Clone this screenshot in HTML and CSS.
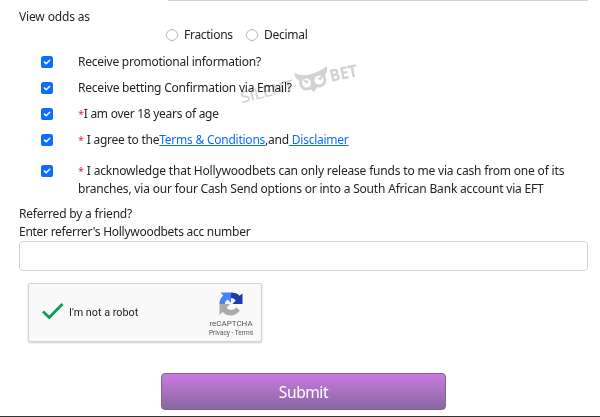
FILE: index.html
```
<!DOCTYPE html>
<html lang="en">
<head>
<meta charset="utf-8">
<title>Registration</title>
<link rel="stylesheet" href="styles.css">
</head>
<body>
<main class="page">
  <div class="previous-field"></div>
  <p class="label odds-label"><span>View odds as</span></p>
  <div class="odds">
    <label class="radio"><i class="circle"></i><span class="fractions">Fractions</span></label>
    <label class="radio"><i class="circle"></i><span class="decimal">Decimal</span></label>
  </div>
  <div class="checks">
    <div class="check"><svg class="box" viewBox="0 0 12 12"><rect width="12" height="12" rx="2.6"/><path d="M3.5 6.1 5.2 7.8 8.7 4.3"/></svg><p><span class="t-promo">Receive promotional information?</span></p></div>
    <div class="check"><svg class="box" viewBox="0 0 12 12"><rect width="12" height="12" rx="2.6"/><path d="M3.5 6.1 5.2 7.8 8.7 4.3"/></svg><p><span class="t-email">Receive betting Confirmation via Email?</span></p></div>
    <div class="check"><svg class="box" viewBox="0 0 12 12"><rect width="12" height="12" rx="2.6"/><path d="M3.5 6.1 5.2 7.8 8.7 4.3"/></svg><p><span class="t-age"><b>*</b>I am over 18 years of age</span></p></div>
    <div class="check"><svg class="box" viewBox="0 0 12 12"><rect width="12" height="12" rx="2.6"/><path d="M3.5 6.1 5.2 7.8 8.7 4.3"/></svg><p><span class="t-terms"><b>*</b> I agree to the<a>Terms &amp; Conditions</a>,and<a> Disclaimer</a></span></p></div>
    <div class="check long"><svg class="box" viewBox="0 0 12 12"><rect width="12" height="12" rx="2.6"/><path d="M3.5 6.1 5.2 7.8 8.7 4.3"/></svg><p><span class="t-ack1"><b>*</b> I acknowledge that Hollywoodbets can only release funds to me via cash from one of its</span><br><span class="t-ack2">branches, via our four Cash Send options or into a South African Bank account via EFT</span></p></div>
  </div>
  <p class="label"><span class="t-ref">Referred by a friend?</span></p>
  <p class="label"><span class="t-enter">Enter referrer's Hollywoodbets acc number</span></p>
  <div class="input"></div>
  <div class="captcha">
    <svg class="tick" viewBox="0 0 24 20"><path d="M2 10.5 8.2 16.5 21.5 3"/></svg>
    <span class="robot">I'm not a robot</span>
    <div class="brand">
      <svg class="arrows" viewBox="0 0 24 24">
        <path fill="#1c3aa9" d="M12 .5c3.600 0 6.500 1 8.500 3.300L23.500 1.500V12H13.500L16.700 8.500C15.500 6.800 14 6 12 6Z"/>
        <path fill="#4285f4" d="M12 .5V11L8.500 7.500C7 8.700 6 10 6 12H.5C.5 8.500 1.700 5.900 4.300 3.500L1.500.5Z"/>
        <path fill="#ababab" d="M.5 12H11L7.700 15.500C9.200 18.500 14.500 19 17.500 15.300L20.800 18.700C16.300 24.600 8.500 25 3.700 19.900L.5 23Z"/>
      </svg>
      <span class="name">reCAPTCHA</span>
      <span class="legal">Privacy - Terms</span>
    </div>
  </div>
  <button class="submit">Submit</button>
  <div class="footer-line"></div>
  <svg class="watermark" viewBox="0 0 130 50">
    <g fill="#d2d2d2">
      <text class="silent" transform="translate(7 45) rotate(-14)" font-size="15" textLength="54" lengthAdjust="spacingAndGlyphs">SILENT</text>
      <text class="bet" transform="translate(96 24) rotate(-12)" font-size="17" textLength="28" lengthAdjust="spacingAndGlyphs">BET</text>
      <path d="M59 15Q68 19 76 16Q84 14 92 8Q93 14 89 18L84 17 78 20 71 19 65 23Q60 21 59 15ZM74 30 79 27 83 28 79 34Z"/>
      <g fill="none" stroke="#d2d2d2" stroke-width="3">
        <circle cx="71.500" cy="25" r="6"/><circle cx="84" cy="22" r="6"/>
      </g>
      <path d="M67 21 74 23 72 26ZM82 21 88 17 86 22Z"/>
    </g>
  </svg>
</main>
</body>
</html>
```

FILE: styles.css
```
* { box-sizing: border-box; }
body { margin: 0; background: #fff; color: #212529; font: 12px/18px "Noto Sans", "Open Sans", sans-serif; }
.page { position: relative; height: 417px; overflow: hidden; padding: 0 12px 0 19px; display: flex; flex-direction: column; }
.page > * { flex-shrink: 0; }
p { margin: 0; white-space: nowrap; }
.previous-field { height: 1px; margin-left: 149px; background: #ced4da; }
.label { height: 18px; line-height: 18px; letter-spacing: -.15px; }
.odds-label { margin-top: 7px; }
.odds { display: flex; height: 18px; margin-left: 147px; }
.radio { display: flex; align-items: center; width: 80px; letter-spacing: -.28px; }
.circle { width: 12px; height: 12px; margin-right: 6px; border: 1px solid #b5b7ba; border-radius: 50%; }
.checks { margin: 5px 0 4px 22px; }
.check { display: flex; align-items: center; height: 26px; }
.check p { line-height: 18px; }
.box { width: 12px; height: 12px; margin-right: 25px; flex: none; }
.box rect { fill: #0d6efd; }
.box path { fill: none; stroke: #fff; stroke-width: 1.500; stroke-linecap: round; stroke-linejoin: round; }
.long { height: 48px; align-items: flex-start; padding-top: 9px; }
.long .box { margin-top: 3px; }
.t-promo { letter-spacing: -.25px; }
.t-email { letter-spacing: -.22px; }
.t-age { letter-spacing: -.28px; }
.t-terms { letter-spacing: -.24px; }
.t-ack1 { letter-spacing: -.18px; }
.t-ack2 { letter-spacing: -.19px; }
.t-ref { letter-spacing: -.2px; }
.t-enter { letter-spacing: -.27px; }
b { color: #dc3545; font-weight: 400; font-size: 11px; }
a { color: #0d6efd; text-decoration: underline; }
.input { height: 30px; border: 1px solid #ced4da; border-radius: 4px; }
.captcha { display: flex; width: 234px; height: 59px; margin: 12px 0 0 9px; background: #f9f9f9; border: 1px solid #d3d3d3; border-radius: 2px; box-shadow: 0 1px 2px #ccc; font-family: Roboto, sans-serif; align-items: center; }
.tick { width: 24px; height: 20px; margin: -4px 4px 0 12px; flex: none; }
.robot { font-size: 10.800px; width: 132px; color: #222; white-space: nowrap; flex: none; }
.tick path { fill: none; stroke: #0f9d58; stroke-width: 2.800; }
.brand { display: flex; flex-direction: column; align-items: center; width: 60px; padding-top: 4px; }
.arrows { width: 24px; height: 24px; }
.name { font-size: 8px; line-height: 10px; color: #555; margin-top: 3px; }
.legal { font-size: 6.500px; line-height: 9px; color: #555; }
.submit { width: 285px; height: 37px; margin: 31px 0 0 142px; padding: 0; border: 1px solid #80619b; border-radius: 4px; background: linear-gradient(#cb7ae2, #88689f); color: #fff; font: 15.500px "Noto Sans", sans-serif; letter-spacing: -.4px; }
.footer-line { height: 1px; margin: 6px -12px 0 -19px; background: #333; }
.watermark { position: absolute; left: 235px; top: 58px; width: 130px; height: 50px; mix-blend-mode: multiply; font-family: "Open Sans", sans-serif; }
.silent { stroke: #d2d2d2; stroke-width: .4; }
.bet { font-weight: 700; }
```
